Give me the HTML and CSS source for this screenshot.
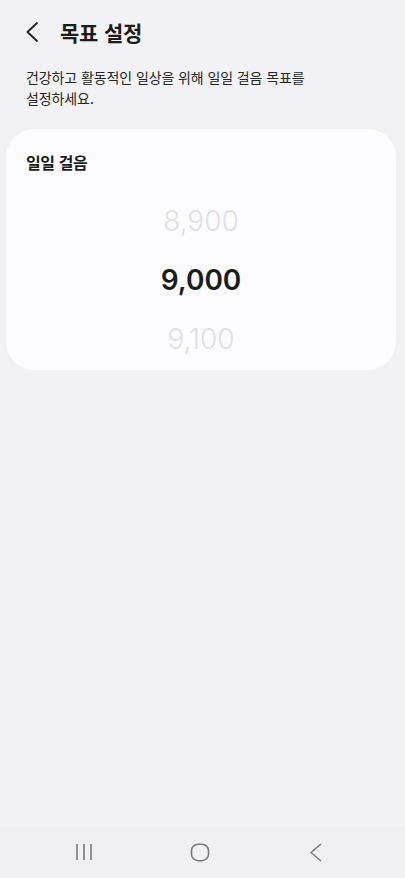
FILE: index.html
```html
<!DOCTYPE html>
<html lang="ko">
<head>
  <meta charset="UTF-8" />
  <meta name="viewport" content="width=device-width, initial-scale=1.0" />
  <title>목표 설정</title>
  <link rel="stylesheet" href="styles.css">
</head>
<body>
  <div class="screen">
    <div class="header">
      <button class="back" aria-label="뒤로">
        <svg width="14" height="22" viewBox="0 0 14 22">
          <path d="M12 2 L2.5 11 L12 20" fill="none" stroke="#1f1f1f" stroke-width="1.8" stroke-linecap="round" stroke-linejoin="round" />
        </svg>
      </button>
      <h1>목표 설정</h1>
    </div>

    <p class="desc">건강하고 활동적인 일상을 위해 일일 걸음 목표를<br>설정하세요.</p>

    <div class="card">
      <div class="card-title">일일 걸음</div>
      <div class="picker">
        <div class="row faded">8,900</div>
        <div class="row selected">9,000</div>
        <div class="row faded">9,100</div>
      </div>
    </div>

    <div class="spacer"></div>

    <div class="navbar">
      <div class="nav-btn">
        <svg width="18" height="18" viewBox="0 0 18 18">
          <path d="M2 1 V17 M9 1 V17 M16 1 V17" stroke="#7a7a7e" stroke-width="1.6" fill="none" />
        </svg>
      </div>
      <div class="nav-btn">
        <svg width="20" height="19" viewBox="0 0 20 19">
          <rect x="1.5" y="1.2" width="17" height="16.5" rx="6.5" fill="none" stroke="#7a7a7e" stroke-width="1.6" />
        </svg>
      </div>
      <div class="nav-btn">
        <svg width="14" height="19" viewBox="0 0 14 19">
          <path d="M12 1 L2 9.5 L12 18" fill="none" stroke="#7a7a7e" stroke-width="1.6" stroke-linejoin="round" />
        </svg>
      </div>
    </div>
  </div>
</body>
</html>
```

FILE: styles.css
```css
body {
  margin: 0;
  background-color: #f2f2f4;
  font-family: "Noto Sans CJK KR", "Noto Sans", sans-serif;
  color: #1c1c1c;
}

.screen {
  height: 878px;
  display: flex;
  flex-direction: column;
}

.header {
  height: 64px;
  display: flex;
  align-items: center;
  padding-left: 25px;
}

.back {
  border: none;
  background: none;
  padding: 0;
  width: 14px;
  height: 22px;
  margin-right: 21px;
  cursor: pointer;
}

h1 {
  margin: 0;
  font-size: 21px;
  font-weight: bold;
  letter-spacing: -0.2px;
  line-height: 28px;
}

.desc {
  margin: 3px 26px 0;
  font-size: 14px;
  line-height: 21px;
  letter-spacing: -0.1px;
  color: #262626;
}

.card {
  margin: 20px 9px 0 6px;
  height: 241px;
  background: #fcfcfe;
  border-radius: 28px;
  overflow: hidden;
}

.card-title {
  padding: 21px 20px 0;
  font-size: 16px;
  font-weight: bold;
  letter-spacing: -0.4px;
  line-height: 24px;
}

.picker {
  margin-top: 18px;
}

.row {
  height: 59px;
  line-height: 59px;
  text-align: center;
  font-family: Inter, Roboto, sans-serif;
  font-size: 28px;
}

.faded {
  font-weight: 300;
  color: #e0e0e2;
}

.selected {
  font-weight: 600;
  color: #1c1c1c;
}

.spacer {
  flex: 1;
}

.navbar {
  height: 52px;
  background: #f0f0f4;
  display: grid;
  grid-template-columns: repeat(3, 116px);
  justify-content: center;
  padding-right: 5px;
  align-items: center;
}

.nav-btn {
  display: flex;
  justify-content: center;
  align-items: center;
}
```
